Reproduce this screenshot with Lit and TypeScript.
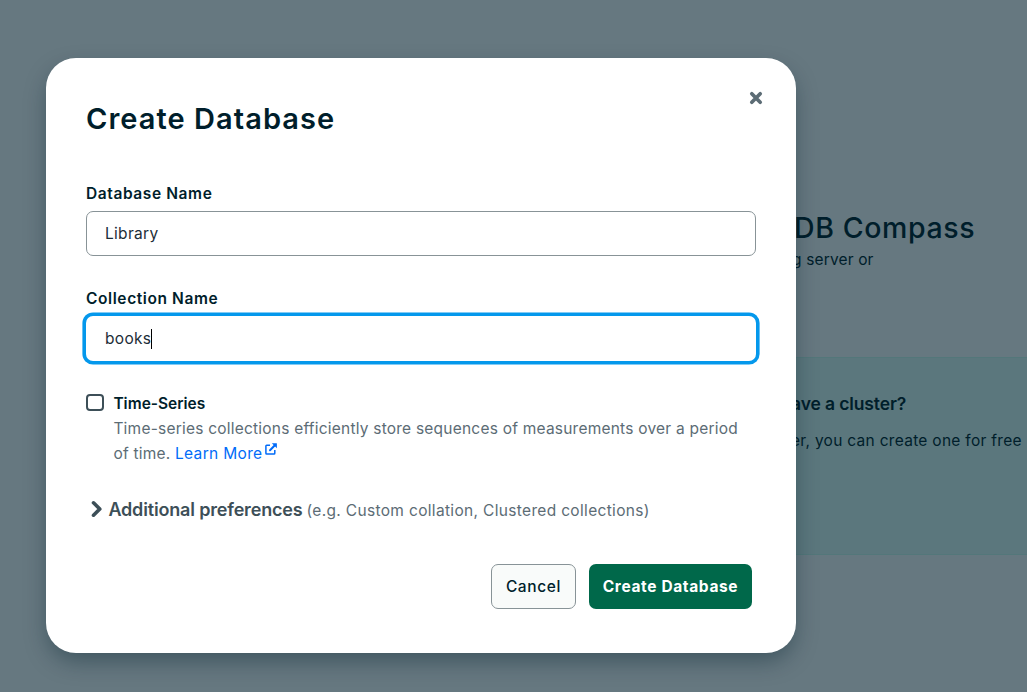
import { LitElement, html, css } from "lit";
import { customElement, property, state } from "lit/decorators.js";

@customElement("name-field")
class NameField extends LitElement {
  @property() label = "";
  @property() value = "";
  @property({ type: Boolean, reflect: true }) active = false;

  static styles = css`
    :host { display: block; }
    .label { display: block; line-height: 25px; font-weight: 600; font-size: 15.5px; letter-spacing: 0.6px; color: #001e2b; }
    .box {
      box-sizing: border-box; height: 45px; margin-top: 5px; padding: 0 18px;
      display: flex; align-items: center; border: 1px solid #889397;
      border-radius: 7px; background: #fff; color: #1c2d38; font-size: 15.5px; letter-spacing: 0.3px;
    }
    .focused { border-color: transparent; box-shadow: 0 0 0 3.6px #0498ec; }
    .caret { width: 1px; height: 20px; background: #000; }
  `;

  render() {
    return html`
      <span class="label">${this.label}</span>
      <div class="box ${this.active ? "focused" : ""}">
        <span class="value">${this.value}</span>
        ${this.active ? html`<span class="caret"></span>` : ""}
      </div>
    `;
  }
}

@customElement("app-root")
class AppRoot extends LitElement {
  @state() database = "Library";
  @state() collection = "books";

  static styles = css`
    :host {
      display: block; position: relative; width: 1027px; height: 692px; overflow: hidden;
      background: #667880; font-family: Inter, "Liberation Sans", sans-serif; color: #001e2b;
    }
    .page { padding-top: 208px; white-space: nowrap; }
    .heading { padding-left: 794px; line-height: 40px; font-size: 28.5px; font-weight: 500; letter-spacing: 0.6px; }
    .sub { padding-left: 792px; line-height: 25px; font-size: 15.5px; margin-top: -1px; letter-spacing: 0.15px; }
    .panel {
      box-sizing: border-box; margin: 85px 0 0 400px; height: 198px; padding: 33px 0 0 391px;
      background: #5b777d; border: solid #53777a; border-width: 1px 0;
    }
    .panel-title { line-height: 25px; font-size: 17.5px; font-weight: 600; letter-spacing: -0.12px; }
    .panel-text { line-height: 25px; font-size: 15.5px; margin-top: 12px; letter-spacing: 0.29px; }
    .dialog {
      position: absolute; left: 46px; top: 58px; box-sizing: border-box; width: 750px; height: 595px;
      padding: 40px; border-radius: 30px; background: #fff;
      box-shadow: 0 10px 25px -3px rgba(0, 30, 43, 0.42);
      display: flex; flex-direction: column;
    }
    .top { display: flex; justify-content: space-between; align-items: flex-start; height: 40px; margin-bottom: 43px; }
    .title { margin: 0; line-height: 42px; font-size: 29px; font-weight: 600; letter-spacing: 1.05px; }
    .close { width: 14px; height: 14px; margin: -7px -7.4px 0 0; }
    .second { margin-top: 30px; }
    .option { display: flex; margin-top: 30px; }
    .check { box-sizing: border-box; width: 18px; height: 17px; border: 2px solid #3d4f58; border-radius: 4px; margin: 3px 9.4px 0 0; flex: none; }
    .option-title { line-height: 25px; font-size: 15.5px; font-weight: 600; }
    .note { line-height: 25px; font-size: 15.5px; color: #5c6c75; white-space: nowrap; letter-spacing: 0.22px; }
    .link { color: #016bf8; letter-spacing: 0.32px; }
    .external { width: 12px; height: 12px; margin-left: 2.5px; vertical-align: 4px; }
    .more { display: flex; align-items: center; height: 25px; margin-top: 31px; white-space: nowrap; }
    .chevron { width: 12px; height: 18px; margin: -1px 5.4px 0 5px; flex: none; }
    .more-title { font-size: 18px; font-weight: 600; color: #3d4f58; letter-spacing: -0.17px; }
    .hint { font-size: 15.5px; line-height: 24px; color: #5c6c75; margin: 2px 0 0 4px; letter-spacing: 0.33px; }
    .actions { display: flex; justify-content: flex-end; gap: 13px; margin: 42px 4px 0 0; }
    .button {
      box-sizing: border-box; height: 45px; border-radius: 7px; display: flex; align-items: center;
      justify-content: center; font-size: 15.5px; white-space: nowrap; letter-spacing: 0.63px;
    }
    .cancel { width: 85px; border: 1px solid #889397; background: #f9fbfa; font-weight: 500; }
    .create { width: 163px; background: #00684a; color: #fff; font-weight: 700; }
  `;

  render() {
    return html`
      <div class="page">
        <div class="heading">DB Compass</div>
        <div class="sub">g server or</div>
        <div class="panel">
          <div class="panel-title">ave a cluster?</div>
          <div class="panel-text">er, you can create one for free</div>
        </div>
      </div>
      <div class="dialog" role="dialog">
        <div class="top">
          <h1 class="title">Create Database</h1>
          <svg class="close" viewBox="0 0 14 14"><path d="M2.8 2.8 11.2 11.2M11.2 2.8 2.8 11.2" stroke="#5c6c75" stroke-width="3.7" stroke-linecap="round" /></svg>
        </div>
        <name-field label="Database Name" .value=${this.database}></name-field>
        <name-field class="second" label="Collection Name" .value=${this.collection} active></name-field>
        <div class="option">
          <span class="check"></span>
          <div>
            <div class="option-title">Time-Series</div>
            <div class="note">Time-series collections efficiently store sequences of measurements over a period<br />of time. <span class="link">Learn More<svg class="external" viewBox="0 0 12 12" fill="none" stroke="#016bf8"><path d="M5 2.2H1.7a.8.8 0 0 0-.8.8v7.2a.8.8 0 0 0 .8.8H9a.8.8 0 0 0 .8-.8V7" stroke-width="1.5" /><path d="M5 7.2 9.4 2.8" stroke-width="2" stroke-linecap="round" /><path d="M6.8.2H11.6a.3.3 0 0 1 .3.3V5.2Z" fill="#016bf8" stroke="none" /></svg></span></div>
          </div>
        </div>
        <div class="more">
          <svg class="chevron" viewBox="0 0 12 18"><path d="M2.5 2.8 8.8 9 2.5 15.2" fill="none" stroke="#3d4f58" stroke-width="3.6" stroke-linecap="round" stroke-linejoin="round" /></svg>
          <span class="more-title">Additional preferences</span>
          <span class="hint">(e.g. Custom collation, Clustered collections)</span>
        </div>
        <div class="actions">
          <div class="button cancel" role="button">Cancel</div>
          <div class="button create" role="button">Create Database</div>
        </div>
      </div>
    `;
  }
}
